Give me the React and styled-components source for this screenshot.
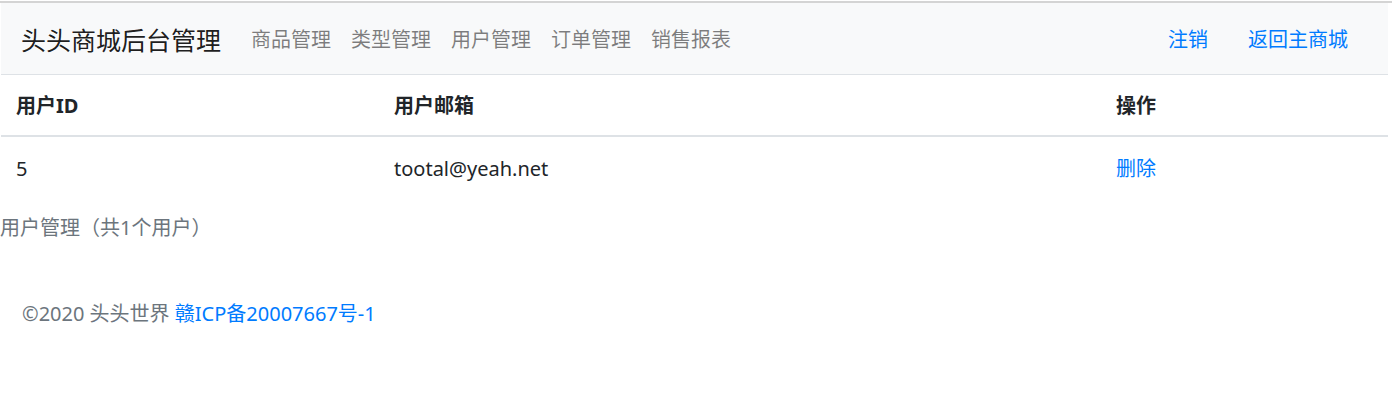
import React from "react";
import styled, { createGlobalStyle } from "styled-components";

const Global = createGlobalStyle`
  html, body { margin: 0; padding: 0; background: #fff; }
  body {
    font-family: "Noto Sans", "Noto Sans CJK SC", sans-serif;
    font-size: 20px;
    color: #212529;
  }
  a { text-decoration: none; }
`;

const TopLine = styled.div`
  height: 2px;
  margin-top: 1px;
  background: #d4d4d4;
`;

const Page = styled.div`
  width: 1387px;
  margin-left: 1px;
`;

const Navbar = styled.nav`
  display: flex;
  align-items: center;
  height: 72px;
  padding: 0 20px 0 20px;
  background: #f8f9fa;
  border-bottom: 1px solid #dee2e6;
  box-sizing: border-box;
`;

const Brand = styled.a`
  font-size: 25px;
  color: rgba(0, 0, 0, 0.9);
  margin-right: 20px;
  white-space: nowrap;
`;

const NavList = styled.div`
  display: flex;
  align-items: center;
  flex: ${(p) => (p.$grow ? 1 : "none")};
`;

const NavLink = styled.a`
  font-size: 20px;
  padding: 0 ${(p) => (p.$wide ? 20 : 10)}px;
  color: ${(p) => (p.$primary ? "#007bff" : "rgba(0,0,0,0.5)")};
  white-space: nowrap;
`;

const Table = styled.table`
  width: 100%;
  border-collapse: collapse;
  caption-side: bottom;
  table-layout: fixed;
`;

const Caption = styled.caption`
  text-align: left;
  color: #6c757d;
  padding: 15px 0;
  margin-left: -1px;
  line-height: 30px;
`;

const Th = styled.th`
  box-sizing: border-box;
  text-align: left;
  font-weight: 700;
  padding: 16px 15px 14px;
  line-height: 30px;
  border-bottom: 2px solid #dee2e6;
  width: ${(p) => p.$w || "auto"};
`;

const Td = styled.td`
  padding: 17px 15px 14px;
  line-height: 30px;
`;

const Link = styled.a`
  color: #007bff;
`;

const Footer = styled.footer`
  padding: 41px 21px;
  color: #6c757d;
  line-height: 30px;
`;

export default function App() {
  return (
    <>
      <Global />
      <TopLine />
      <Page>
        <Navbar>
          <Brand href="#">头头商城后台管理</Brand>
          <NavList $grow>
            <NavLink href="#">商品管理</NavLink>
            <NavLink href="#">类型管理</NavLink>
            <NavLink href="#">用户管理</NavLink>
            <NavLink href="#">订单管理</NavLink>
            <NavLink href="#">销售报表</NavLink>
          </NavList>
          <NavList>
            <NavLink href="#" $primary $wide>注销</NavLink>
            <NavLink href="#" $primary $wide>返回主商城</NavLink>
          </NavList>
        </Navbar>
        <Table>
          <Caption>用户管理（共1个用户）</Caption>
          <thead>
            <tr>
              <Th $w="378px">用户ID</Th>
              <Th $w="722px">用户邮箱</Th>
              <Th>操作</Th>
            </tr>
          </thead>
          <tbody>
            <tr>
              <Td>5</Td>
              <Td>tootal@yeah.net</Td>
              <Td>
                <Link href="#">删除</Link>
              </Td>
            </tr>
          </tbody>
        </Table>
        <Footer>
          ©2020 头头世界 <Link href="#">赣ICP备20007667号-1</Link>
        </Footer>
      </Page>
    </>
  );
}
